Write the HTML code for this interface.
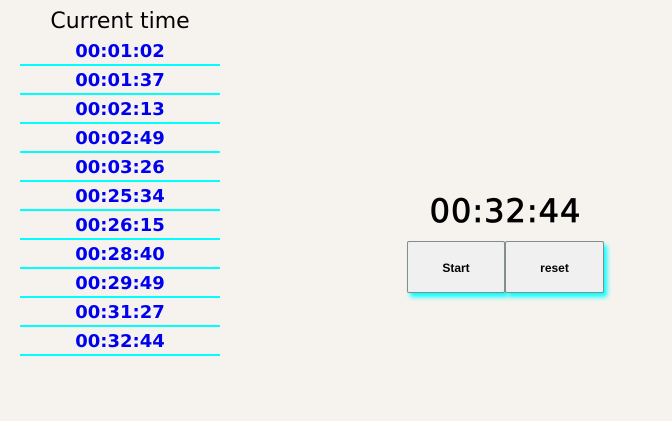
<!DOCTYPE html>
<html><head><style>
body{margin:0;width:672px;height:421px;background:#f6f3ef;position:relative;overflow:hidden;font-family:"Comic Sans MS","DejaVu Sans",sans-serif}
h1{position:absolute;left:20px;width:200px;top:7px;margin:0;text-align:center;font-size:22px;font-weight:normal;color:#000;line-height:30px}
.list{position:absolute;left:20px;top:37px;width:200px}
.row{height:27px;border-bottom:2px solid #00ffff;text-align:center;color:#0000ee;font-weight:bold;font-size:18px;line-height:30px}
.big{position:absolute;left:407px;width:197px;top:191px;text-align:center;font-size:32px;font-weight:normal;-webkit-text-stroke:0.8px #000;line-height:40px;letter-spacing:1px;color:#000}
.btn{position:absolute;top:241px;height:52px;background:#f0f0f0;border:1px solid #8a8a8a;border-radius:2px;box-sizing:border-box;font-family:"Liberation Sans",Arial,sans-serif;font-weight:bold;font-size:12px;text-align:center;line-height:52px;box-shadow:3px 4px 5px #00ffff}
</style></head><body>
<h1>Current time</h1>
<div class="list">
<div class="row">00:01:02</div>
<div class="row">00:01:37</div>
<div class="row">00:02:13</div>
<div class="row">00:02:49</div>
<div class="row">00:03:26</div>
<div class="row">00:25:34</div>
<div class="row">00:26:15</div>
<div class="row">00:28:40</div>
<div class="row">00:29:49</div>
<div class="row">00:31:27</div>
<div class="row">00:32:44</div>
</div>
<div class="big">00:32:44</div>
<div class="btn" style="left:407px;width:98px">Start</div>
<div class="btn" style="left:505px;width:99px">reset</div>
</body></html>
